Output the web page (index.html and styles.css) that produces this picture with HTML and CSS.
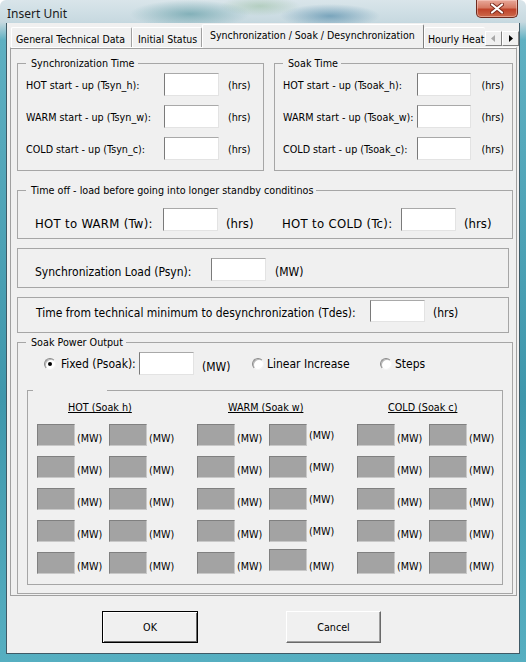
FILE: index.html
```html
<!DOCTYPE html>
<html lang="en">
<head>
    <meta charset="UTF-8">
    <meta name="viewport" content="width=device-width, initial-scale=1.0">
    <title>Insert Unit</title>
    <link rel="stylesheet" href="styles.css">
</head>
<body>
    <div class="window">
        <div class="titlebar">
            <span class="title">Insert Unit</span>
            <div class="close-btn">
                <svg width="14" height="11" viewBox="0 0 14 11">
                    <path d="M2 1.5 L12 9.5 M12 1.5 L2 9.5" stroke="#7a2a1c" stroke-width="4" stroke-linecap="round"/>
                    <path d="M2 1.5 L12 9.5 M12 1.5 L2 9.5" stroke="#ffffff" stroke-width="2.2" stroke-linecap="round"/>
                </svg>
            </div>
        </div>

        <div class="client">
            <!-- Tab strip -->
            <div class="tabs">
                <div class="tab tab-general">General Technical Data</div>
                <div class="tab tab-initial">Initial Status</div>
                <div class="tab tab-active">Synchronization / Soak / Desynchronization</div>
                <div class="tab tab-hourly">Hourly Heat Rate</div>
                <div class="tab-scroll">
                    <span class="scroll-btn">
                        <svg width="15" height="13" viewBox="0 0 15 13"><polygon points="9,3 5,6.5 9,10" fill="#a8a8a8"/></svg>
                    </span>
                    <span class="scroll-btn">
                        <svg width="15" height="13" viewBox="0 0 15 13"><polygon points="6,3 10,6.5 6,10" fill="#000"/></svg>
                    </span>
                </div>
            </div>

            <div class="page">
                <div class="top-row">
                    <fieldset class="group group-sync">
                        <legend>Synchronization Time</legend>
                        <div class="field-row">
                            <span class="lbl lbl-sync">HOT start - up (Tsyn_h):</span>
                            <input class="txt txt-sync" type="text">
                            <span class="unit unit-sync">(hrs)</span>
                        </div>
                        <div class="field-row">
                            <span class="lbl lbl-sync">WARM start - up (Tsyn_w):</span>
                            <input class="txt txt-sync" type="text">
                            <span class="unit unit-sync">(hrs)</span>
                        </div>
                        <div class="field-row">
                            <span class="lbl lbl-sync">COLD start - up (Tsyn_c):</span>
                            <input class="txt txt-sync" type="text">
                            <span class="unit unit-sync">(hrs)</span>
                        </div>
                    </fieldset>

                    <fieldset class="group group-soak">
                        <legend>Soak Time</legend>
                        <div class="field-row">
                            <span class="lbl lbl-soak">HOT start - up (Tsoak_h):</span>
                            <input class="txt txt-soak" type="text">
                            <span class="unit unit-soak">(hrs)</span>
                        </div>
                        <div class="field-row">
                            <span class="lbl lbl-soak">WARM start - up (Tsoak_w):</span>
                            <input class="txt txt-soak" type="text">
                            <span class="unit unit-soak">(hrs)</span>
                        </div>
                        <div class="field-row">
                            <span class="lbl lbl-soak">COLD start - up (Tsoak_c):</span>
                            <input class="txt txt-soak" type="text">
                            <span class="unit unit-soak">(hrs)</span>
                        </div>
                    </fieldset>
                </div>

                <fieldset class="group group-timeoff">
                    <legend>Time off - load before going into longer standby conditinos</legend>
                    <div class="timeoff-row">
                        <span class="lbl xl lbl-tw">HOT to WARM (Tw):</span>
                        <input class="txt" type="text">
                        <span class="unit xl unit-tw">(hrs)</span>
                        <span class="lbl xl lbl-tc">HOT to COLD (Tc):</span>
                        <input class="txt" type="text">
                        <span class="unit xl unit-tc">(hrs)</span>
                    </div>
                </fieldset>

                <div class="frame frame-psyn">
                    <span class="lbl lg lbl-psyn">Synchronization Load (Psyn):</span>
                    <input class="txt" type="text">
                    <span class="unit lg unit-psyn">(MW)</span>
                </div>

                <div class="frame frame-tdes">
                    <span class="lbl lg lbl-tdes">Time from technical minimum to desynchronization (Tdes):</span>
                    <input class="txt txt-tdes" type="text">
                    <span class="unit lg unit-tdes">(hrs)</span>
                </div>

                <fieldset class="group group-power">
                    <legend>Soak Power Output</legend>
                    <div class="radio-row">
                        <span class="radio checked"></span>
                        <span class="lg opt-fixed">Fixed (Psoak):</span>
                        <input class="txt" type="text">
                        <span class="lg unit-fixed">(MW)</span>
                        <span class="radio"></span>
                        <span class="lg opt-linear">Linear Increase</span>
                        <span class="radio"></span>
                        <span class="lg opt-steps">Steps</span>
                    </div>

                    <fieldset class="inner">
                        <legend>&nbsp;</legend>
                        <div class="steps">
                            <div class="step-col">
                                <div class="step-head">HOT (Soak h)</div>
                                <div class="step-row"><div class="cell"><span class="gbox"></span><span class="mw">(MW)</span></div><div class="cell"><span class="gbox"></span><span class="mw">(MW)</span></div></div>
                                <div class="step-row"><div class="cell"><span class="gbox"></span><span class="mw">(MW)</span></div><div class="cell"><span class="gbox"></span><span class="mw">(MW)</span></div></div>
                                <div class="step-row"><div class="cell"><span class="gbox"></span><span class="mw">(MW)</span></div><div class="cell"><span class="gbox"></span><span class="mw">(MW)</span></div></div>
                                <div class="step-row"><div class="cell"><span class="gbox"></span><span class="mw">(MW)</span></div><div class="cell"><span class="gbox"></span><span class="mw">(MW)</span></div></div>
                                <div class="step-row"><div class="cell"><span class="gbox"></span><span class="mw">(MW)</span></div><div class="cell"><span class="gbox"></span><span class="mw">(MW)</span></div></div>
                            </div>
                            <div class="step-col">
                                <div class="step-head">WARM (Soak w)</div>
                                <div class="step-row"><div class="cell"><span class="gbox"></span><span class="mw">(MW)</span></div><div class="cell cell-up"><span class="gbox"></span><span class="mw">(MW)</span></div></div>
                                <div class="step-row"><div class="cell"><span class="gbox"></span><span class="mw">(MW)</span></div><div class="cell cell-up"><span class="gbox"></span><span class="mw">(MW)</span></div></div>
                                <div class="step-row"><div class="cell"><span class="gbox"></span><span class="mw">(MW)</span></div><div class="cell cell-up"><span class="gbox"></span><span class="mw">(MW)</span></div></div>
                                <div class="step-row"><div class="cell"><span class="gbox"></span><span class="mw">(MW)</span></div><div class="cell cell-up"><span class="gbox"></span><span class="mw">(MW)</span></div></div>
                                <div class="step-row"><div class="cell"><span class="gbox"></span><span class="mw">(MW)</span></div><div class="cell cell-last"><span class="gbox"></span><span class="mw">(MW)</span></div></div>
                            </div>
                            <div class="step-col">
                                <div class="step-head">COLD (Soak c)</div>
                                <div class="step-row"><div class="cell"><span class="gbox"></span><span class="mw">(MW)</span></div><div class="cell"><span class="gbox"></span><span class="mw">(MW)</span></div></div>
                                <div class="step-row"><div class="cell"><span class="gbox"></span><span class="mw">(MW)</span></div><div class="cell"><span class="gbox"></span><span class="mw">(MW)</span></div></div>
                                <div class="step-row"><div class="cell"><span class="gbox"></span><span class="mw">(MW)</span></div><div class="cell"><span class="gbox"></span><span class="mw">(MW)</span></div></div>
                                <div class="step-row"><div class="cell"><span class="gbox"></span><span class="mw">(MW)</span></div><div class="cell"><span class="gbox"></span><span class="mw">(MW)</span></div></div>
                                <div class="step-row"><div class="cell"><span class="gbox"></span><span class="mw">(MW)</span></div><div class="cell"><span class="gbox"></span><span class="mw">(MW)</span></div></div>
                            </div>
                        </div>
                    </fieldset>
                </fieldset>
            </div>

            <div class="buttons">
                <button class="btn btn-ok">OK</button>
                <button class="btn btn-cancel">Cancel</button>
            </div>
        </div>
    </div>
</body>
</html>
```

FILE: styles.css
```css
* {
    box-sizing: border-box;
}

body {
    margin: 0;
    width: 526px;
    height: 662px;
    overflow: hidden;
    font-family: "DejaVu Sans Condensed", "Liberation Sans", sans-serif;
    font-size: 10.7px;
    color: #000;
}

/* Aero style glass frame */
.window {
    width: 526px;
    height: 662px;
    display: flex;
    flex-direction: column;
    padding: 0 6px 8px 6px;
    background:
        radial-gradient(ellipse 60px 14px at 190px 14px, rgba(70, 140, 150, 0.55), transparent),
        radial-gradient(ellipse 50px 12px at 330px 16px, rgba(40, 110, 150, 0.5), transparent),
        radial-gradient(ellipse 40px 10px at 260px 6px, rgba(120, 170, 120, 0.35), transparent),
        linear-gradient(to bottom, #d9e5ea 0, #c7d9e0 22px, #5fb0c2 40px, #3f97ac 60%, #56afc1 100%);
    border-radius: 6px 6px 0 0;
}

.titlebar {
    height: 23px;
    display: flex;
    align-items: flex-start;
    flex-shrink: 0;
}

.title {
    padding: 6px 0 0 1px;
    font-family: "Noto Sans", "Open Sans", sans-serif;
    font-size: 12px;
    line-height: 15px;
    color: #1a1a1a;
}

.close-btn {
    margin-left: auto;
    margin-right: 2px;
    width: 42px;
    height: 18px;
    display: flex;
    align-items: center;
    justify-content: center;
    border: 1px solid #6e2a1e;
    border-top: none;
    border-radius: 0 0 5px 5px;
    background: linear-gradient(to bottom, #e8a89a 0, #d67a64 45%, #c0432a 55%, #cc6a4c 100%);
    box-shadow: inset 0 0 0 1px rgba(255, 220, 210, 0.45);
}

.client {
    flex: 1;
    display: flex;
    flex-direction: column;
    background: #f0f0f0;
    border: 1px solid #3f5a66;
    border-top: none;
}

/* Tabs */
.tabs {
    height: 24px;
    flex-shrink: 0;
    display: flex;
    align-items: flex-end;
    padding-left: 4px;
    font-size: 10.5px;
}

.tab {
    height: 20px;
    padding: 2px 0 0 4px;
    display: flex;
    align-items: center;
    white-space: nowrap;
    overflow: hidden;
    border-top: 1px solid #fff;
    border-left: 1px solid #fff;
    border-right: 1px solid #a0a0a0;
    border-radius: 2px 2px 0 0;
}

.tab-general {
    width: 121px;
}

.tab-initial {
    width: 70px;
    padding-left: 5px;
}

.tab-active {
    width: 222px;
    height: 24px;
    padding: 0 0 4px 7px;
    margin-bottom: -1px;
    position: relative;
    z-index: 1;
    background: #f0f0f0;
    border-top: 1px solid #fff;
    border-left: 1px solid #fff;
    border-right: 1px solid #808080;
}

.tab-hourly {
    width: 61px;
    border-right: none;
    padding-left: 3px;
}

.tab-scroll {
    display: flex;
    margin-bottom: 1px;
}

.scroll-btn {
    width: 17px;
    height: 15px;
    display: flex;
    align-items: center;
    justify-content: center;
    background: #f0f0f0;
    border: 1px solid;
    border-color: #fff #808080 #808080 #fff;
}

/* Tab page */
.page {
    margin: 0 2px 0 3px;
    padding: 0 3px 1px 6px;
    border: 1px solid #a0a0a0;
    border-top-color: #fff;
    box-shadow: inset 0 1px 0 #a0a0a0;
}

.top-row {
    display: flex;
    gap: 10px;
    margin-top: 9px;
}

.group {
    margin: 0;
    min-width: 0;
    padding: 0 8px;
    border: 1px solid #a6a6a6;
}

.group legend {
    padding: 0 3px 0 5px;
    line-height: 13px;
}

.group-sync {
    width: 247px;
    padding-top: 3px;
    padding-bottom: 10px;
}

.group-soak {
    width: 239px;
    padding-top: 3px;
    padding-bottom: 10px;
}

.group-sync .field-row + .field-row,
.group-soak .field-row + .field-row {
    margin-top: 9px;
}

.field-row {
    height: 23px;
    display: flex;
    align-items: center;
}

.lbl,
.unit {
    white-space: nowrap;
    padding-top: 2px;
}

.lg {
    font-size: 12px;
}

.xl {
    font-size: 13px;
    letter-spacing: 0.3px;
}

.txt {
    width: 55px;
    height: 23px;
    margin: 0;
    padding: 0;
    background: #fff;
    border: 1px solid;
    border-color: #a9a9a9 #e3e3e3 #e3e3e3 #7a7a7a;
    font: inherit;
    flex-shrink: 0;
}

.lbl-sync {
    width: 138px;
}

.unit-sync {
    margin-left: 9px;
}

.lbl-soak {
    width: 137px;
}

.txt-soak {
    width: 54px;
}

.unit-soak {
    margin-left: 10px;
}

/* Time off */
.group-timeoff {
    margin-top: 13px;
    padding-top: 11px;
    padding-bottom: 7px;
}

.timeoff-row {
    height: 23px;
    margin-left: 9px;
    display: flex;
    align-items: flex-end;
}

.timeoff-row .lbl,
.timeoff-row .unit {
    padding-top: 0;
    line-height: 15px;
}

.lbl-tw {
    width: 128px;
}

.unit-tw {
    width: 56px;
    margin-left: 8px;
    letter-spacing: 0;
}

.lbl-tc {
    width: 119px;
}

.unit-tc {
    margin-left: 8px;
    letter-spacing: 0;
}

/* Single line frames */
.frame {
    width: 492px;
    margin-top: 9px;
    display: flex;
    align-items: center;
    border: 1px solid #a6a6a6;
}

.frame-psyn {
    padding: 9px 0 6px 17px;
}

.frame-psyn .lbl,
.frame-psyn .unit {
    padding-top: 4px;
}

.lbl-psyn {
    width: 176px;
}

.unit-psyn {
    margin-left: 9px;
}

.frame-tdes {
    padding: 2px 0 10px 18px;
}

.frame-tdes .lbl,
.frame-tdes .unit {
    padding-top: 3px;
}

.lbl-tdes {
    width: 334px;
}

.txt-tdes {
    height: 22px;
}

.unit-tdes {
    margin-left: 8px;
}

/* Soak power output */
.group-power {
    margin-top: 3px;
    padding: 0 9px 8px 8px;
}

.radio-row {
    height: 23px;
    margin-top: 3px;
    padding-left: 18px;
    display: flex;
    align-items: center;
}

.radio {
    width: 12px;
    height: 12px;
    flex-shrink: 0;
    border-radius: 50%;
    background: #fff;
    border: 1px solid;
    border-color: #8a8a8a #f4f4f4 #f4f4f4 #8a8a8a;
    box-shadow: inset 1px 1px 0 #b8b8b8;
    display: flex;
    align-items: center;
    justify-content: center;
}

.radio.checked::after {
    content: '';
    width: 4px;
    height: 4px;
    border-radius: 50%;
    background: #000;
}

.opt-fixed {
    width: 78px;
    margin-left: 5px;
}

.unit-fixed {
    width: 50px;
    margin-left: 8px;
    padding-top: 7px;
}

.opt-linear {
    width: 113px;
    margin-left: 3px;
}

.opt-steps {
    margin-left: 3px;
}

.inner {
    width: 476px;
    margin: 9px 0 0 1px;
    padding: 4px 5px 10px 5px;
    min-width: 0;
    border: 1px solid #a6a6a6;
}

.inner legend {
    width: 74px;
    padding: 0;
    line-height: 13px;
}

.steps {
    display: flex;
    gap: 16px;
    margin-left: 4px;
}

.step-col {
    width: 144px;
    display: flex;
    flex-direction: column;
    gap: 10px;
}

.step-head {
    height: 13px;
    line-height: 13px;
    padding-left: 31px;
    text-decoration: underline;
}

.step-row {
    height: 22px;
    display: flex;
}

.cell {
    width: 72px;
    display: flex;
    align-items: center;
}

.gbox {
    width: 38px;
    height: 22px;
    flex-shrink: 0;
    background: #a3a3a3;
    border: 1px solid;
    border-color: #808080 #c8c8c8 #c8c8c8 #808080;
}

.mw {
    margin-left: 2px;
    padding-top: 6px;
}

.cell-up .mw {
    padding-top: 0;
}

.cell-last .gbox {
    margin-top: -6px;
}

.cell-last .mw {
    padding-top: 6px;
}

/* Bottom buttons */
.buttons {
    flex: 1;
    display: flex;
    align-items: flex-start;
    padding: 15px 0 0 95px;
}

.btn {
    width: 96px;
    height: 32px;
    margin: 0;
    padding: 0;
    font: inherit;
    font-size: 10.7px;
    color: #000;
    background: #f0f0f0;
    border: 1px solid;
    border-color: #fff #696969 #696969 #fff;
    box-shadow: inset -1px -1px 0 #a0a0a0;
}

.btn-ok {
    border: 1px solid #000;
    box-shadow: inset 1px 1px 0 #fff, inset -1px -1px 0 #696969;
}

.btn-cancel {
    width: 95px;
    margin-left: 88px;
}
```
